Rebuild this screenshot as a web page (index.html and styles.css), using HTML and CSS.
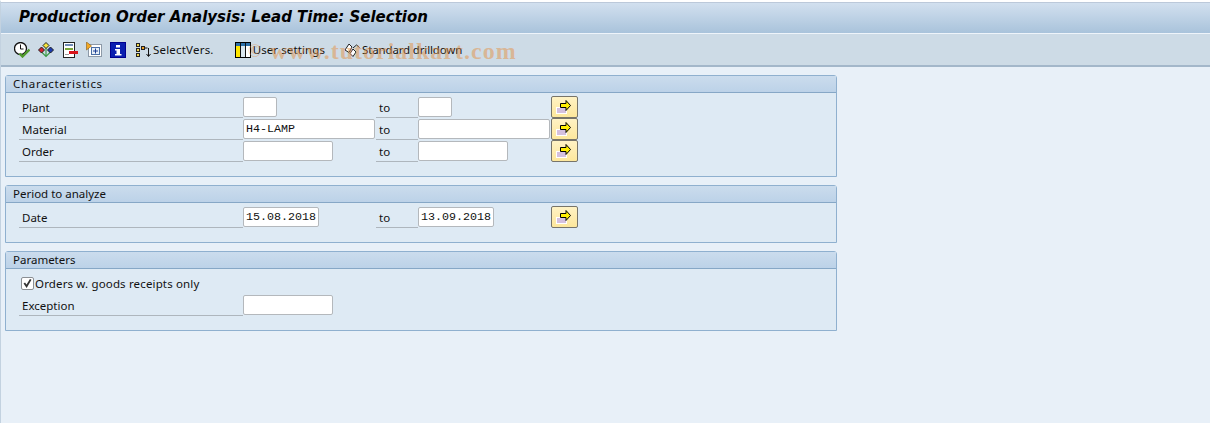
FILE: index.html
```html
<!DOCTYPE html>
<html lang="en">
<head>
<meta charset="utf-8">
<title>Production Order Analysis: Lead Time: Selection</title>
<link rel="stylesheet" href="styles.css">
</head>
<body>
<svg class="defs" width="0" height="0" aria-hidden="true">
  <defs>
    <symbol id="multi" viewBox="0 0 15 14">
      <rect x="0.500" y="7.500" width="10" height="6" fill="#d5c0de" stroke="#fff"/>
      <path d="M4.500 3.500H10V.5L14.500 5.500 10 10.500V7.500H4.500z" fill="#ffee00" stroke="#000"/>
    </symbol>
  </defs>
</svg>
<header class="title-bar">
  <h1 class="title">Production Order Analysis: Lead Time: Selection</h1>
</header>
<nav class="toolbar">
  <svg class="icon" viewBox="0 0 16 16"><circle cx="6.500" cy="6.500" r="6" fill="#fff" stroke="#111" stroke-width="1.300"/><path d="M6.500 2.500v4.500h3" fill="none" stroke="#111"/><path d="M5.500 11.500l3 3 7-7" fill="none" stroke="#4f9a2c" stroke-width="2.400"/></svg>
  <svg class="icon" viewBox="0 0 16 16"><path d="M8 6v9M3.500 10l4.500 4.500 4.500-4.500" fill="none" stroke="#3f9a4a" stroke-width="1.200"/><path d="M8 .500l3 3-3 3-3-3z" fill="#f6e53a" stroke="#222"/><path d="M3.500 5l3 3-3 3-3-3z" fill="#d8202c" stroke="#222"/><path d="M12.500 5l3 3-3 3-3-3z" fill="#1b3bb0" stroke="#222"/></svg>
  <svg class="icon" viewBox="0 0 16 16"><rect x="1.500" y=".5" width="11" height="15" fill="#fff" stroke="#222"/><path d="M3 3h8" stroke="#6f8bb5" stroke-width="2"/><rect x="3" y="6" width="8" height="2" fill="#7ba63a"/><path d="M3 12.500h4" stroke="#999"/><rect x="7" y="9" width="9" height="3" fill="#d8141c"/></svg>
  <svg class="icon" viewBox="0 0 16 16"><rect x="2.500" y="2.500" width="13" height="12" fill="#fff" stroke="#8d9aa8"/><rect x="5.500" y="5.500" width="8" height="7" fill="#e8f0f8" stroke="#4a6fa5"/><path d="M9.500 6.500v5M7 9h5" stroke="#1c3f94"/><path d="M0.500 0v8l5-4z" fill="#f3a824" stroke="#8a5a10" stroke-width=".6"/></svg>
  <svg class="icon" viewBox="0 0 16 16"><rect width="16" height="16" fill="#00008f"/><rect x="1" y="1" width="14" height="14" fill="#0a1fb0"/><path d="M6 3h4v2.500H6zM5 7h5v5h1.500v1.500h-6.500V12h1.500V8.500H5z" fill="#fff"/></svg>
  <button class="tool tool-vers"><svg class="icon-vers" viewBox="0 0 16 16"><g fill="#f2d84a" stroke="#222"><rect x="1.500" y="1.500" width="3" height="3"/><rect x="1.500" y="6.500" width="3" height="3"/><rect x="1.500" y="11.500" width="3" height="3"/><rect x="6.500" y="4.500" width="3" height="3" fill="#f0a020"/></g><path d="M10 6h2.500M13.500 6v8M11.500 12l2 2.500 2-2.500" fill="none" stroke="#111"/></svg>SelectVers.</button>
  <button class="tool tool-user"><svg class="icon-table" viewBox="0 0 16 16"><rect x=".5" y=".5" width="15" height="15" fill="#fff" stroke="#000"/><rect x="1" y="1" width="14" height="3" fill="#2c6fa8"/><rect x="1" y="4" width="4" height="11" fill="#ffe600"/><rect x="6" y="4" width="4" height="11" fill="#d9e6ee"/><path d="M5.500 1v14M10.500 1v14" stroke="#111"/></svg>User settings</button>
  <button class="tool tool-drill"><svg class="icon-drill" viewBox="0 0 16 16"><path d="M1 8l4-6 3 3-3 5.500z" fill="#fff" stroke="#222"/><path d="M6 11.500l3 3 3-4.500-3-3z" fill="#fff" stroke="#222"/><path d="M9 6l3.500-3 3 2.500" fill="none" stroke="#222"/></svg>Standard drilldown</button>
  <div class="watermark"><span class="wm-c">©</span><span class="wm-t">www.tutorialkart.com</span></div>
</nav>
<main class="content">
  <section class="panel panel-chars">
    <h2 class="panel-head head-chars">Characteristics</h2>
    <div class="form">
      <div class="label">Plant</div><div class="field-cell"><div class="field w-s"></div></div><div class="to">to</div><div class="field-cell"><div class="field w-s"></div></div>
      <div class="more"><svg class="multi"><use href="#multi"/></svg></div>
      <div class="label">Material</div><div class="field-cell"><div class="field w-l">H4-LAMP</div></div><div class="to">to</div><div class="field-cell"><div class="field w-l"></div></div>
      <div class="more"><svg class="multi"><use href="#multi"/></svg></div>
      <div class="label">Order</div><div class="field-cell"><div class="field w-m"></div></div><div class="to">to</div><div class="field-cell"><div class="field w-m"></div></div>
      <div class="more"><svg class="multi"><use href="#multi"/></svg></div>
    </div>
  </section>
  <section class="panel panel-period">
    <h2 class="panel-head">Period to analyze</h2>
    <div class="form">
      <div class="label">Date</div><div class="field-cell"><div class="field w-d">15.08.2018</div></div><div class="to">to</div><div class="field-cell"><div class="field w-d">13.09.2018</div></div>
      <div class="more"><svg class="multi"><use href="#multi"/></svg></div>
    </div>
  </section>
  <section class="panel panel-params">
    <h2 class="panel-head">Parameters</h2>
    <div class="form">
      <div class="check-row"><span class="check"><svg viewBox="0 0 12 12"><path d="M2.500 5.500l2.500 3.500 4.500-7.500" fill="none" stroke="#333" stroke-width="2"/></svg></span>Orders w. goods receipts only</div>
      <div class="label">Exception</div><div class="field-cell"><div class="field w-m"></div></div>
    </div>
  </section>
</main>
</body>
</html>
```

FILE: styles.css
```css
* { box-sizing: border-box; }
html, body { margin: 0; height: 100%; }
body {
  width: 1210px;
  height: 423px;
  overflow: hidden;
  background: #e8f0f8;
  border-left: 1px solid #c3d2e0;
  border-top: 2px solid #fff;
  font-family: "Noto Sans", sans-serif;
  font-size: 11.5px;
  color: #111;
  position: relative;
}
.defs { position: absolute; }
.title-bar {
  height: 31px;
  background: linear-gradient(#d2e0ef, #a9c3db);
  border-top: 1px solid #bcc9da;
  display: flex;
  align-items: center;
  padding: 0 0 3px 18px;
}
.title {
  margin: 0;
  font-family: "DejaVu Sans", sans-serif;
  font-size: 15px;
  font-weight: 700;
  font-style: italic;
  color: #000;
  white-space: nowrap;
}
.toolbar {
  position: relative;
  height: 34px;
  background: #cddbe6;
  border-top: 1px solid #eef4fa;
  border-bottom: 2px solid #a3b7ca;
  display: flex;
  align-items: center;
  padding-left: 13px;
  gap: 8px;
}
.icon { width: 16px; height: 16px; flex: none; }
.icon-vers, .icon-table, .icon-drill { width: 16px; height: 16px; flex: none; margin-right: 2px; }
.tool {
  display: flex;
  align-items: center;
  border: 0;
  padding: 0;
  background: none;
  font: inherit;
  color: #111;
  white-space: nowrap;
}
.tool-vers { margin-left: 1px; letter-spacing: .2px; }
.tool-user { margin-left: 13px; letter-spacing: .1px; }
.tool-drill { margin-left: 11px; letter-spacing: -.15px; }
.watermark {
  position: absolute;
  left: 247px;
  top: 4px;
  display: flex;
  align-items: center;
  font-family: "Liberation Serif", serif;
  font-size: 24px;
  font-weight: 700;
  letter-spacing: 1px;
  color: rgba(228, 146, 70, .5);
  white-space: nowrap;
  pointer-events: none;
}
.wm-c { width: 22px; font-size: 18px; font-weight: 400; }
.content {
  padding: 8px 0 0 4px;
  display: flex;
  flex-direction: column;
  gap: 8px;
}
.panel {
  width: 832px;
  background: #deeaf4;
  border: 1px solid #8fb0cf;
  border-radius: 3px 3px 0 0;
}
.panel-chars { height: 102px; }
.panel-period { height: 58px; }
.panel-params { height: 80px; }
.panel-head {
  margin: 0;
  height: 17px;
  padding-left: 7px;
  font-size: 11.5px;
  font-weight: 400;
  line-height: 16px;
  color: #111;
  background: linear-gradient(#cbdced, #bcd2e8);
  border-bottom: 1px solid #86a7c6;
}
.head-chars { letter-spacing: .7px; }
.form {
  display: grid;
  grid-template-columns: 224px 133px 42px 133px 1fr;
  grid-auto-rows: 22px;
  padding: 3px 0 0 13px;
}
.label, .to {
  border-bottom: 1px solid #aeb6bd;
  padding: 1px 0 0 3px;
  line-height: 21px;
}
.field-cell { display: flex; align-items: center; }
.field {
  height: 20px;
  background: #fff;
  border: 1px solid #b4b8bc;
  border-radius: 2px;
  padding: 1px 0 0 2px;
  font-family: "Liberation Mono", monospace;
  font-size: 11.67px;
  line-height: 17px;
  color: #111;
  white-space: nowrap;
}
.w-s { width: 34px; }
.w-m { width: 90px; }
.w-l { width: 132px; }
.w-d { width: 76px; }
.more { display: flex; }
.multi {
  width: 27px;
  height: 22px;
  padding: 3px 6px 3px 4px;
  background: linear-gradient(#fff2c4, #fde79c);
  border: 1px solid #77746a;
  border-radius: 2px;
}
.check-row {
  grid-column: 1 / -1;
  display: flex;
  align-items: center;
  gap: 1px;
  padding-left: 2px;
  letter-spacing: .15px;
}
.check {
  width: 13px;
  height: 13px;
  background: #fff;
  border: 1px solid #8b8f93;
  border-radius: 2px;
  display: block;
}
.check svg { display: block; width: 11px; height: 11px; }
```
